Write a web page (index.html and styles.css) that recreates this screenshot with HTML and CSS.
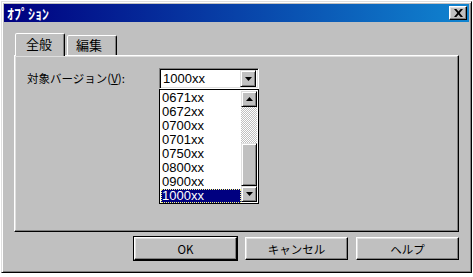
FILE: index.html
```html
<!DOCTYPE html>
<html lang="ja">
<head>
<meta charset="utf-8">
<link rel="stylesheet" href="styles.css">
</head>
<body>
<div class="dialog">
  <div class="titlebar">
    <span class="title">ｵﾌﾟｼｮﾝ</span>
    <button class="close" aria-label="閉じる">
      <svg width="9" height="8" viewBox="0 0 9 8"><path d="M0 0h2.3L4.5 2.6 6.7 0H9L5.7 4 9 8H6.7L4.5 5.4 2.3 8H0l3.3-4z" fill="#000"/></svg>
    </button>
  </div>
  <div class="content">
    <div class="tabs">
      <div class="tab active">全般</div>
      <div class="tab">編集</div>
    </div>
    <div class="panel">
      <div class="row">
        <label class="label">対象バージョン(<u>V</u>):</label>
        <div class="combo-wrap">
          <div class="combo">
            <span class="combo-text">1000xx</span>
            <span class="drop-btn"><svg width="7" height="4" viewBox="0 0 7 4"><path d="M0 0h7L3.5 4z" fill="#000"/></svg></span>
          </div>
          <div class="list">
            <ul class="items">
              <li>0671xx</li>
              <li>0672xx</li>
              <li>0700xx</li>
              <li>0701xx</li>
              <li>0750xx</li>
              <li>0800xx</li>
              <li>0900xx</li>
              <li class="selected"><span class="focus">1000xx</span></li>
            </ul>
            <div class="scrollbar">
              <span class="sb-btn"><svg width="7" height="4" viewBox="0 0 7 4"><path d="M3.5 0L7 4H0z" fill="#000"/></svg></span>
              <span class="track"></span>
              <span class="thumb"></span>
              <span class="sb-btn"><svg width="7" height="4" viewBox="0 0 7 4"><path d="M0 0h7L3.5 4z" fill="#000"/></svg></span>
            </div>
          </div>
        </div>
      </div>
    </div>
    <div class="buttons">
      <button class="btn default">OK</button>
      <button class="btn">キャンセル</button>
      <button class="btn">ヘルプ</button>
    </div>
  </div>
</div>
</body>
</html>
```
FILE: styles.css
```css
html, body {
  margin: 0;
  padding: 0;
  background: #ffffff;
}
body {
  padding: 1px;
  font-family: "Noto Sans CJK JP", "Liberation Sans", sans-serif;
  color: #000;
}
.dialog {
  box-sizing: border-box;
  width: 471px;
  height: 272px;
  background: #c0c0c0;
  border: 1px solid;
  border-color: #dfdfdf #000 #000 #dfdfdf;
  box-shadow: inset 1px 1px 0 #fff, inset -1px -1px 0 #808080;
  padding: 2px;
  display: flex;
  flex-direction: column;
}
.titlebar {
  height: 18px;
  background: linear-gradient(90deg, #000080, #1084d0);
  display: flex;
  align-items: center;
  justify-content: space-between;
  padding: 0 2px 0 3px;
}
.title {
  color: #fff;
  font-size: 14px;
  font-weight: bold;
  line-height: 14px;
}
.close {
  box-sizing: border-box;
  width: 18px;
  height: 14px;
  padding: 0;
  background: #c0c0c0;
  border: 1px solid;
  border-color: #fff #000 #000 #fff;
  box-shadow: inset -1px -1px 0 #808080, inset 1px 1px 0 #dfdfdf;
  display: flex;
  align-items: center;
  justify-content: center;
}
.content {
  padding: 11px 10px 0 10px;
  display: flex;
  flex-direction: column;
}
.tabs {
  display: flex;
  align-items: flex-end;
  height: 22px;
  padding-left: 1px;
  position: relative;
  z-index: 1;
}
.tab {
  box-sizing: border-box;
  height: 20px;
  width: 50px;
  border: 1px solid;
  border-bottom: none;
  border-color: #fff #000 transparent #fff;
  box-shadow: inset -1px 0 0 #808080;
  border-radius: 2px 2px 0 0;
  font-size: 13px;
  line-height: 18px;
  padding-left: 8px;
  background: #c0c0c0;
}
.tab.active {
  height: 23px;
  margin-bottom: -1px;
  margin-right: 2px;
  padding-left: 10px;
  padding-top: 1px;
}
.panel {
  box-sizing: border-box;
  width: 445px;
  height: 177px;
  border: 1px solid;
  border-color: #fff #000 #000 #fff;
  box-shadow: inset -1px -1px 0 #808080, inset 1px 1px 0 #dfdfdf;
  padding: 12px 0 0 12px;
}
.row {
  display: flex;
  align-items: flex-start;
}
.label {
  width: 132px;
  font-size: 11.5px;
  line-height: 14px;
  padding-top: 3px;
}
.label u {
  text-decoration-thickness: 1px;
  text-underline-offset: 1px;
}
.combo-wrap {
  display: flex;
  flex-direction: column;
  width: 100px;
}
.combo {
  box-sizing: border-box;
  height: 21px;
  background: #fff;
  border: 1px solid;
  border-color: #808080 #fff #fff #808080;
  box-shadow: inset 1px 1px 0 #000, inset -1px -1px 0 #dfdfdf;
  display: flex;
  align-items: center;
  justify-content: space-between;
  padding: 2px;
}
.combo-text, .items li {
  font-family: "Liberation Sans", sans-serif;
  font-size: 13px;
}
.combo-text {
  padding-left: 1px;
  line-height: 15px;
}
.drop-btn, .sb-btn {
  box-sizing: border-box;
  width: 16px;
  height: 16px;
  background: #c0c0c0;
  border: 1px solid;
  border-color: #dfdfdf #000 #000 #dfdfdf;
  box-shadow: inset 1px 1px 0 #fff, inset -1px -1px 0 #808080;
  display: flex;
  align-items: center;
  justify-content: center;
}
.drop-btn {
  height: 17px;
}
.list {
  box-sizing: border-box;
  height: 115px;
  border: 1px solid #000;
  background: #fff;
  display: flex;
  padding: 1px;
}
.items {
  list-style: none;
  margin: 0;
  padding: 0;
  flex: 1;
}
.items li {
  height: 14px;
  line-height: 14px;
  padding-left: 1px;
}
.items li.selected {
  background: #000080;
  color: #fff;
  outline: 1px dotted #ffff80;
  outline-offset: -1px;
}
.scrollbar {
  width: 16px;
  display: flex;
  flex-direction: column;
}
.track {
  height: 36px;
  background-color: #fff;
  background-image: conic-gradient(#c0c0c0 25%, #fff 0 50%, #c0c0c0 0 75%, #fff 0);
  background-size: 2px 2px;
}
.thumb {
  box-sizing: border-box;
  flex: 1;
  background: #c0c0c0;
  border: 1px solid;
  border-color: #dfdfdf #000 #000 #dfdfdf;
  box-shadow: inset 1px 1px 0 #fff, inset -1px -1px 0 #808080;
}
.buttons {
  display: flex;
  justify-content: flex-end;
  gap: 8px;
  padding-top: 5px;
  width: 445px;
}
.btn {
  box-sizing: border-box;
  width: 103px;
  height: 23px;
  background: #c0c0c0;
  border: 1px solid;
  border-color: #fff #000 #000 #fff;
  box-shadow: inset -1px -1px 0 #808080, inset 1px 1px 0 #dfdfdf;
  font-family: "Noto Sans CJK JP", "Liberation Sans", sans-serif;
  font-size: 11.5px;
  color: #000;
  padding: 0;
}
.btn.default {
  outline: 1px solid #000;
  outline-offset: 0;
}
```
